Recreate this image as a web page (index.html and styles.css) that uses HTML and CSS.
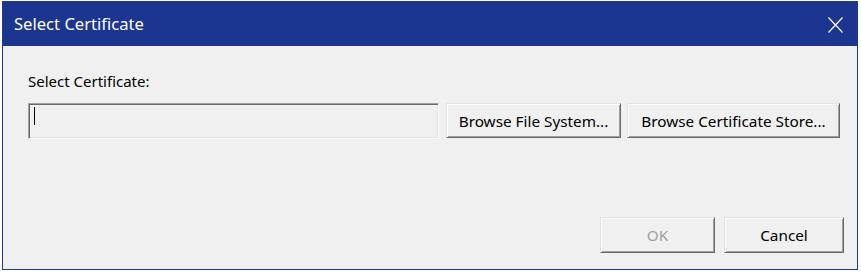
FILE: index.html
```html
<!DOCTYPE html>
<html>
<head>
<meta charset="utf-8">
<link rel="stylesheet" href="styles.css">
</head>
<body>
<div class="window">
  <div class="titlebar">
    <span class="title">Select Certificate</span>
    <svg class="close" width="15" height="16" viewBox="0 0 15 16"><path d="M0.5 0.5 L14.5 15.5 M14.5 0.5 L0.5 15.5" stroke="#fff" stroke-width="1.2" fill="none"/></svg>
  </div>
  <div class="content">
    <div class="label">Select Certificate:</div>
    <div class="row">
      <div class="textbox"><span class="caret"></span></div>
      <button class="btn btn-fs">Browse File System...</button>
      <button class="btn btn-store">Browse Certificate Store...</button>
    </div>
    <div class="footer">
      <button class="btn btn-ok" disabled>OK</button>
      <button class="btn btn-cancel">Cancel</button>
    </div>
  </div>
</div>
</body>
</html>
```
FILE: styles.css
```css
html, body {
  margin: 0;
  padding: 0;
  background: #ffffff;
}
body {
  width: 861px;
  height: 272px;
  overflow: hidden;
  font-family: "Noto Sans", "Open Sans", sans-serif;
}
.window {
  box-sizing: border-box;
  margin: 1px 0 0 2px;
  width: 856px;
  height: 269px;
  border: 1px solid #21398f;
  background: #f0f0f0;
  display: flex;
  flex-direction: column;
}
.titlebar {
  height: 44px;
  background: #1c358f;
  display: flex;
  align-items: center;
  justify-content: space-between;
  padding: 0 14px 0 11px;
  flex: none;
}
.title {
  color: #ffffff;
  font-size: 16.6px;
  margin-top: -1px;
}
.close {
  display: block;
  margin-top: 2px;
}
.content {
  display: flex;
  flex-direction: column;
  padding: 0 0 0 25px;
  flex: 1;
}
.label {
  font-size: 15px;
  color: #000;
  margin-top: 25px;
  height: 20px;
  line-height: 20px;
}
.row {
  display: flex;
  margin-top: 12px;
  height: 36px;
}
.textbox {
  box-sizing: border-box;
  width: 411px;
  height: 36px;
  border-top: 1px solid #a0a0a0;
  border-left: 1px solid #a0a0a0;
  border-right: 1px solid #ffffff;
  border-bottom: 1px solid #ffffff;
  box-shadow: inset 1px 1px 0 #696969, inset -1px -1px 0 #e3e3e3;
  background: #f0f0f0;
  padding: 3px 0 0 5px;
}
.caret {
  display: block;
  width: 1px;
  height: 18px;
  background: #000;
}
.btn {
  box-sizing: border-box;
  height: 35px;
  background: #f0f0f0;
  border-top: 1px solid #e3e3e3;
  border-left: 1px solid #e3e3e3;
  border-right: 1px solid #696969;
  border-bottom: 1px solid #696969;
  box-shadow: inset 1px 1px 0 #ffffff, inset -1px -1px 0 #a0a0a0;
  font-family: "Noto Sans", "Open Sans", sans-serif;
  font-size: 15.3px;
  color: #000;
  padding: 0;
  margin: 0;
}
.btn-fs {
  width: 175px;
  margin-left: 7px;
}
.btn-store {
  width: 213px;
  margin-left: 6px;
}
.footer {
  display: flex;
  justify-content: flex-end;
  margin-top: 78px;
  padding-right: 13px;
}
.btn-ok {
  width: 115px;
  height: 36px;
  color: #a0a0a0;
}
.btn-cancel {
  width: 120px;
  height: 36px;
  margin-left: 9px;
}
```
